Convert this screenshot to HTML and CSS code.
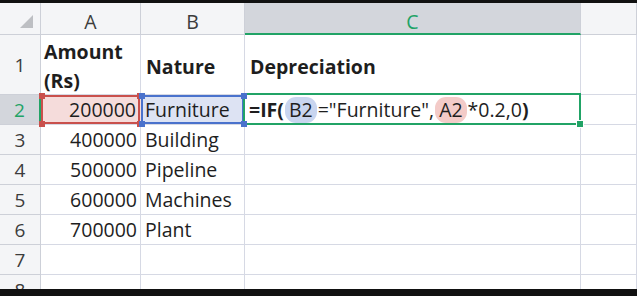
FILE: index.html
```html
<!DOCTYPE html>
<html>
<head>
<meta charset="utf-8">
<link rel="stylesheet" href="styles.css">
</head>
<body>
<div class="sheet">
  <div class="cell hdr corner"><span class="tri"></span></div>
  <div class="cell hdr col">A</div>
  <div class="cell hdr col">B</div>
  <div class="cell hdr col sel-col">C</div>
  <div class="cell hdr col"></div>

  <div class="cell hdr rownum">1</div>
  <div class="cell bold wrap">Amount (Rs)</div>
  <div class="cell bold">Nature</div>
  <div class="cell bold">Depreciation</div>
  <div class="cell"></div>

  <div class="cell hdr rownum sel-row">2</div>
  <div class="cell num range-a">200000<i class="h tl"></i><i class="h tr"></i><i class="h bl"></i><i class="h br"></i></div>
  <div class="cell range-b">Furniture<i class="h tl"></i><i class="h tr"></i><i class="h bl"></i><i class="h br"></i></div>
  <div class="cell active"><span class="formula"><b>=IF(</b><span class="ref rb">B2</span>="Furniture",<span class="ref ra">A2</span>*0.2,0<b>)</b></span><i class="fill"></i></div>
  <div class="cell"></div>

  <div class="cell hdr rownum">3</div>
  <div class="cell num">400000</div>
  <div class="cell">Building</div>
  <div class="cell"></div>
  <div class="cell"></div>

  <div class="cell hdr rownum">4</div>
  <div class="cell num">500000</div>
  <div class="cell">Pipeline</div>
  <div class="cell"></div>
  <div class="cell"></div>

  <div class="cell hdr rownum">5</div>
  <div class="cell num">600000</div>
  <div class="cell">Machines</div>
  <div class="cell"></div>
  <div class="cell"></div>

  <div class="cell hdr rownum">6</div>
  <div class="cell num">700000</div>
  <div class="cell">Plant</div>
  <div class="cell"></div>
  <div class="cell"></div>

  <div class="cell hdr rownum">7</div>
  <div class="cell"></div>
  <div class="cell"></div>
  <div class="cell"></div>
  <div class="cell"></div>

  <div class="cell hdr rownum">8</div>
  <div class="cell"></div>
  <div class="cell"></div>
  <div class="cell"></div>
  <div class="cell"></div>
</div>
</body>
</html>
```

FILE: styles.css
```css
html, body {
  margin: 0;
  padding: 0;
  background: #111;
  width: 637px;
  height: 296px;
  overflow: hidden;
}
body {
  padding-top: 3px;
  box-sizing: border-box;
}
.sheet {
  height: 286px;
  overflow: hidden;
  background: #fff;
  display: grid;
  grid-template-columns: 41px 100px 104px 336px 56px;
  grid-template-rows: 32px 60px repeat(7, 30px);
  font-family: "Open Sans", "Liberation Sans", sans-serif;
  font-size: 19.5px;
  color: #1e1e1e;
}
.cell {
  position: relative;
  box-sizing: border-box;
  border-right: 1px solid #d6d9e4;
  border-bottom: 1px solid #d6d9e4;
  display: flex;
  align-items: center;
  padding: 0 4px;
  white-space: nowrap;
}
.hdr {
  background: #f4f5f7;
  border-right-color: #cdd0d8;
  border-bottom-color: #cdd0d8;
  color: #3c3c3c;
  justify-content: center;
  padding: 0;
}
.col {
  padding-top: 6px;
}
.corner {
  position: relative;
}
.tri {
  position: absolute;
  right: 7px;
  bottom: 6px;
  width: 0;
  height: 0;
  border-left: 13px solid transparent;
  border-bottom: 13px solid #bdbfc3;
}
.sel-col {
  background: #d3d6dc;
  color: #21a366;
  border-bottom: 2px solid #21a366;
}
.rownum {
  font-size: 19px;
}
.sel-row {
  background: #d3d6dc;
  color: #21a366;
  border-right: 2px solid #21a366;
}
.bold {
  font-weight: 700;
  padding-left: 5px;
  padding-top: 3px;
}
.wrap {
  white-space: normal;
  line-height: 29px;
  padding-left: 3px;
  padding-top: 2px;
  align-items: flex-start;
}
.num {
  justify-content: flex-end;
  padding-right: 3px;
}
.range-a {
  background: #f5dcdb;
  box-shadow: inset 0 0 0 2px #c9504c;
  border-right-color: transparent;
  padding-right: 4px;
}
.range-b {
  background: #dde3f3;
  box-shadow: inset 0 0 0 2px #4a72cc;
  padding-left: 4px;
}
.h {
  position: absolute;
  width: 6px;
  height: 6px;
  z-index: 3;
}
.range-a .h { background: #c9504c; }
.range-b .h { background: #4a72cc; }
.h.tl { left: -2px; top: -2px; }
.h.tr { right: -3px; top: -2px; }
.h.bl { left: -2px; bottom: -3px; }
.h.br { right: -3px; bottom: -3px; }
.active {
  padding-left: 4px;
  z-index: 2;
}
.active::after {
  content: "";
  position: absolute;
  left: -2px;
  top: -2px;
  right: -1px;
  bottom: -1px;
  border: 2px solid #21a366;
  pointer-events: none;
}
.formula {
  color: #1e1e1e;
}
.formula b {
  font-weight: 700;
}
.ref {
  display: inline-block;
  padding: 0 4px;
  margin: 0 1px;
  border-radius: 11px;
  line-height: 26px;
}
.rb { background: #c9d5ef; }
.ra { background: #f3cbc8; }
.fill {
  position: absolute;
  right: -4px;
  bottom: -4px;
  width: 6px;
  height: 6px;
  background: #21a366;
  border: 1px solid #fff;
  z-index: 4;
}
```
